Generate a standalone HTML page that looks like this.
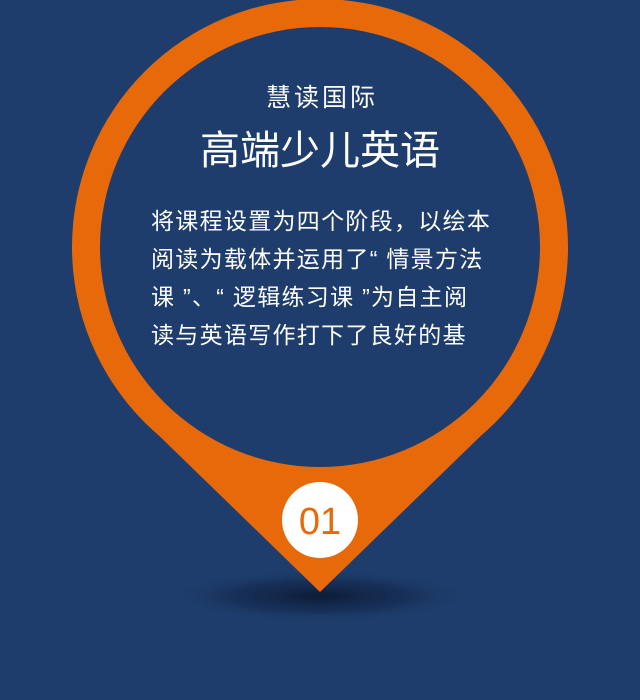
<!DOCTYPE html>
<html><head><meta charset="utf-8"><style>
html,body{margin:0;padding:0;width:640px;height:700px;overflow:hidden;background:#1e3d6c;}
.t{position:absolute;color:#fff;font-family:"Liberation Sans","Noto Sans CJK SC",sans-serif;white-space:nowrap;}
</style></head><body>
<svg width="640" height="700" style="position:absolute;left:0;top:0">
<defs>
<radialGradient id="sh" cx="50%" cy="50%" r="50%"><stop offset="0" stop-color="#0c1a33" stop-opacity="0.95"/><stop offset="0.6" stop-color="#13284c" stop-opacity="0.6"/><stop offset="1" stop-color="#1e3d6c" stop-opacity="0"/></radialGradient>
</defs>
<rect width="640" height="700" fill="#1e3d6c"/>
<ellipse cx="320" cy="596" rx="150" ry="26" fill="url(#sh)"/>
<circle cx="320" cy="247" r="248" fill="#e8690a"/>
<polygon points="147,424 320,592 493,424" fill="#e8690a"/>
<circle cx="320" cy="247" r="220" fill="#1e3d6c"/>
<circle cx="320" cy="520" r="38" fill="#fff"/>
<text x="320" y="534" text-anchor="middle" font-family="Liberation Sans,sans-serif" font-size="38" font-weight="300" fill="#e8690a">01</text>
</svg>
<div class="t" style="left:2px;width:640px;text-align:center;top:78px;font-size:25px;letter-spacing:3px;">慧读国际</div>
<div class="t" style="left:0;width:640px;text-align:center;top:118px;font-size:40px;">高端少儿英语</div>
<div class="t" style="left:151px;top:202px;font-size:23px;letter-spacing:1.3px;line-height:38px;">将课程设置为四个阶段，以绘本<br>阅读为载体并运用了“ 情景方法<br>课 ”、“ 逻辑练习课 ”为自主阅<br>读与英语写作打下了良好的基</div>
</body></html>
